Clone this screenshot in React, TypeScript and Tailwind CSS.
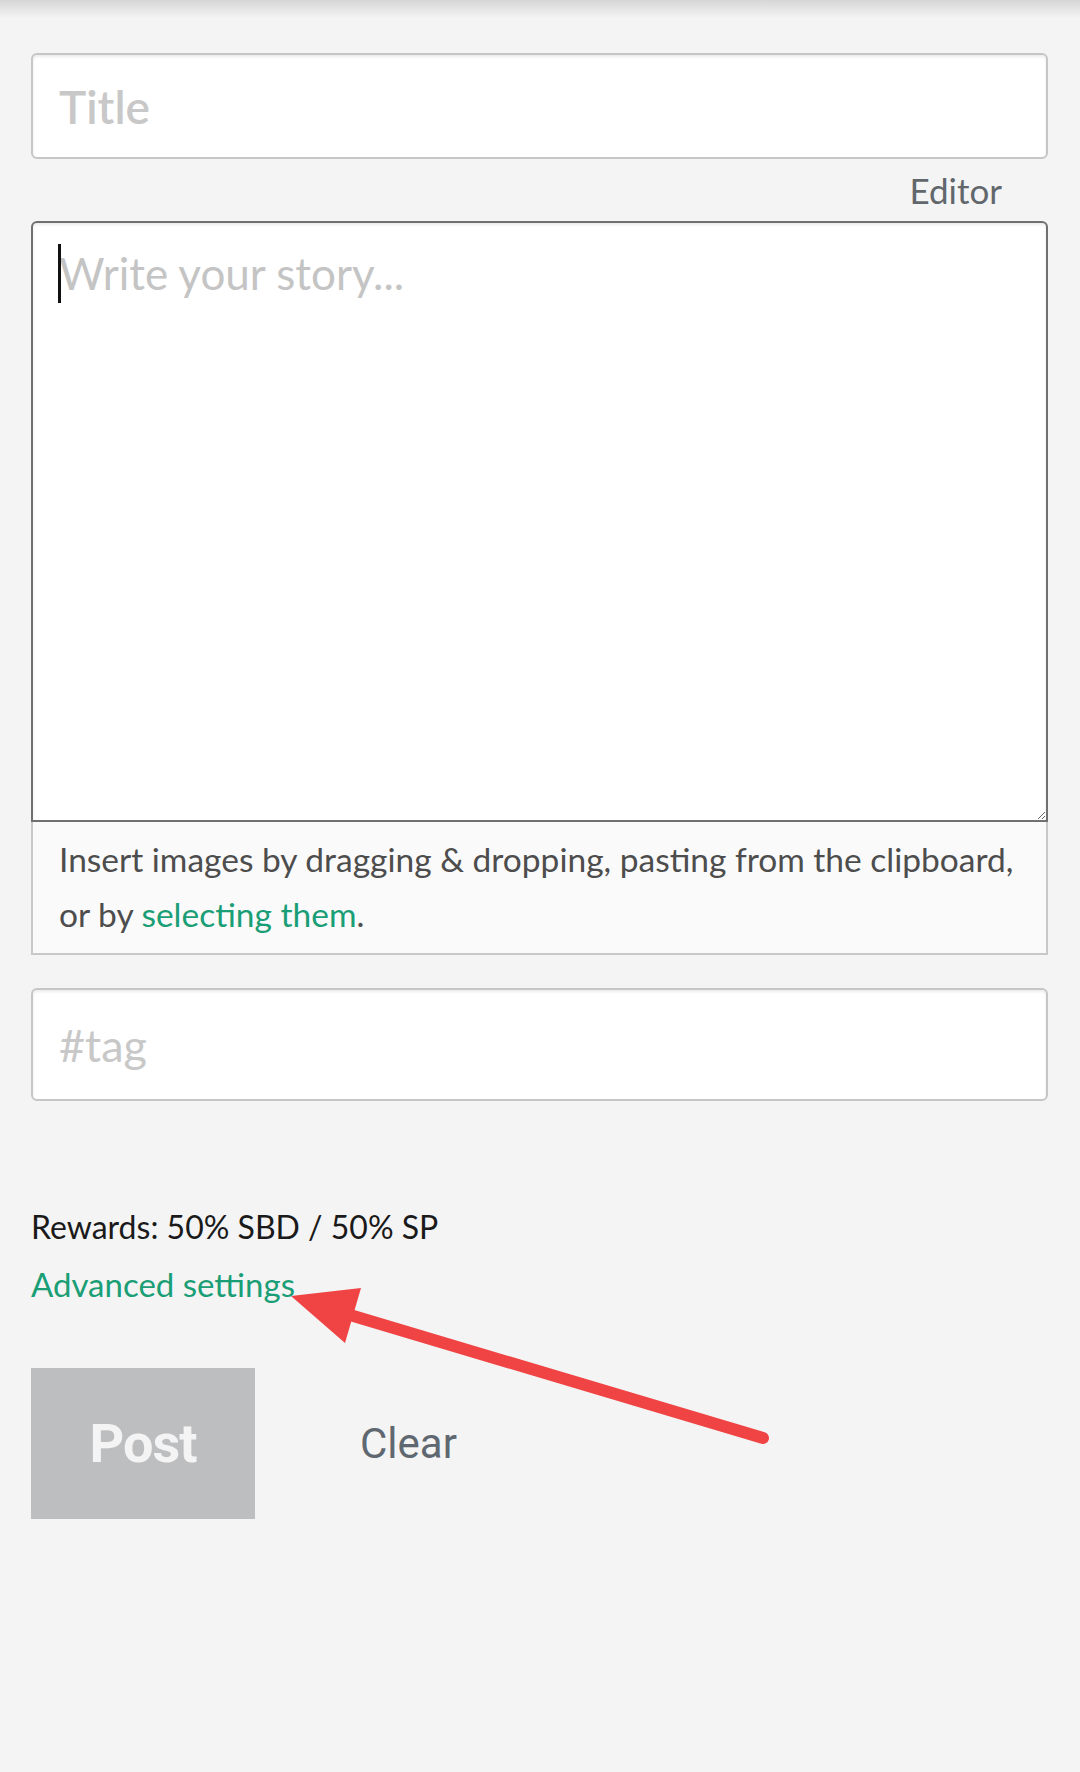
export default function App() {
  return (
    <main className="relative min-h-[1772px] w-[1080px] bg-[#f4f4f4] font-['Lato',sans-serif] text-[#333]">
      <div className="h-[18px] bg-gradient-to-b from-[#d6d6d6] to-[#f4f4f4]" />

      <div className="pl-[31px] pr-[32px] pt-[35px]">
        <input
          placeholder="Title"
          className="h-[106px] w-full rounded-[6px] border-2 border-[#c6c6c6] bg-white px-[26px] text-[46px] font-semibold text-[#333] shadow-[inset_0_2px_3px_rgba(0,0,0,0.08)] outline-none placeholder:text-[#c8c8c8]"
        />

        <div className="flex h-[62px] items-center justify-end pr-[46px] text-[35px] text-[#62676c]">
          Editor
        </div>

        <div className="relative">
          <textarea
            placeholder="Write your story..."
            className="block h-[601px] w-full resize-y rounded-t-[6px] border-2 border-[#707070] bg-white px-[26px] pt-[20px] text-[44px] leading-[60px] text-[#333] shadow-[inset_0_2px_3px_rgba(0,0,0,0.08)] outline-none placeholder:text-[#c4c4c4]"
          />
          <span className="absolute left-[27px] top-[23px] h-[59px] w-[3px] bg-[#111]" />
        </div>

        <div className="h-[133px] whitespace-nowrap border-2 border-t-0 border-[#c8c8c8] bg-[#fafafa] pl-[26px] pt-[10px] text-[33.5px] leading-[55px] text-[#4d4d4d]">
          Insert images by dragging &amp; dropping, pasting from the clipboard,
          <br />
          or by <span className="text-[#1a9e76]">selecting them</span>.
        </div>

        <input
          placeholder="#tag"
          className="mt-[33px] h-[113px] w-full rounded-[6px] border-2 border-[#c6c6c6] bg-white px-[26px] text-[45px] text-[#333] shadow-[inset_0_2px_3px_rgba(0,0,0,0.08)] outline-none placeholder:text-[#c8c8c8]"
        />

        <div className="mt-[106px] text-[32px] leading-[40px] text-[#1a1a1a]">
          Rewards: 50% SBD / 50% SP
        </div>
        <div className="mt-[17px] text-[33px] leading-[40px] text-[#1a9e76]">Advanced settings</div>

        <div className="mt-[64px] flex items-center">
          <button className="flex h-[151px] w-[224px] items-center justify-center bg-[#bdbec0] font-['Roboto',sans-serif] text-[54px] font-bold tracking-[-1px] text-[#f4f4f4]">
            Post
          </button>
          <button className="ml-[105px] font-['Roboto',sans-serif] text-[42px] text-[#5f6770]">
            Clear
          </button>
        </div>
      </div>

      <svg
        className="pointer-events-none absolute left-0 top-0"
        width="1080"
        height="1772"
        viewBox="0 0 1080 1772"
      >
        <line
          x1="340"
          y1="1312"
          x2="763"
          y2="1438"
          stroke="#f04444"
          strokeWidth="12"
          strokeLinecap="round"
        />
        <polygon points="291,1296 361,1288 345,1343" fill="#f04444" />
      </svg>
    </main>
  );
}
